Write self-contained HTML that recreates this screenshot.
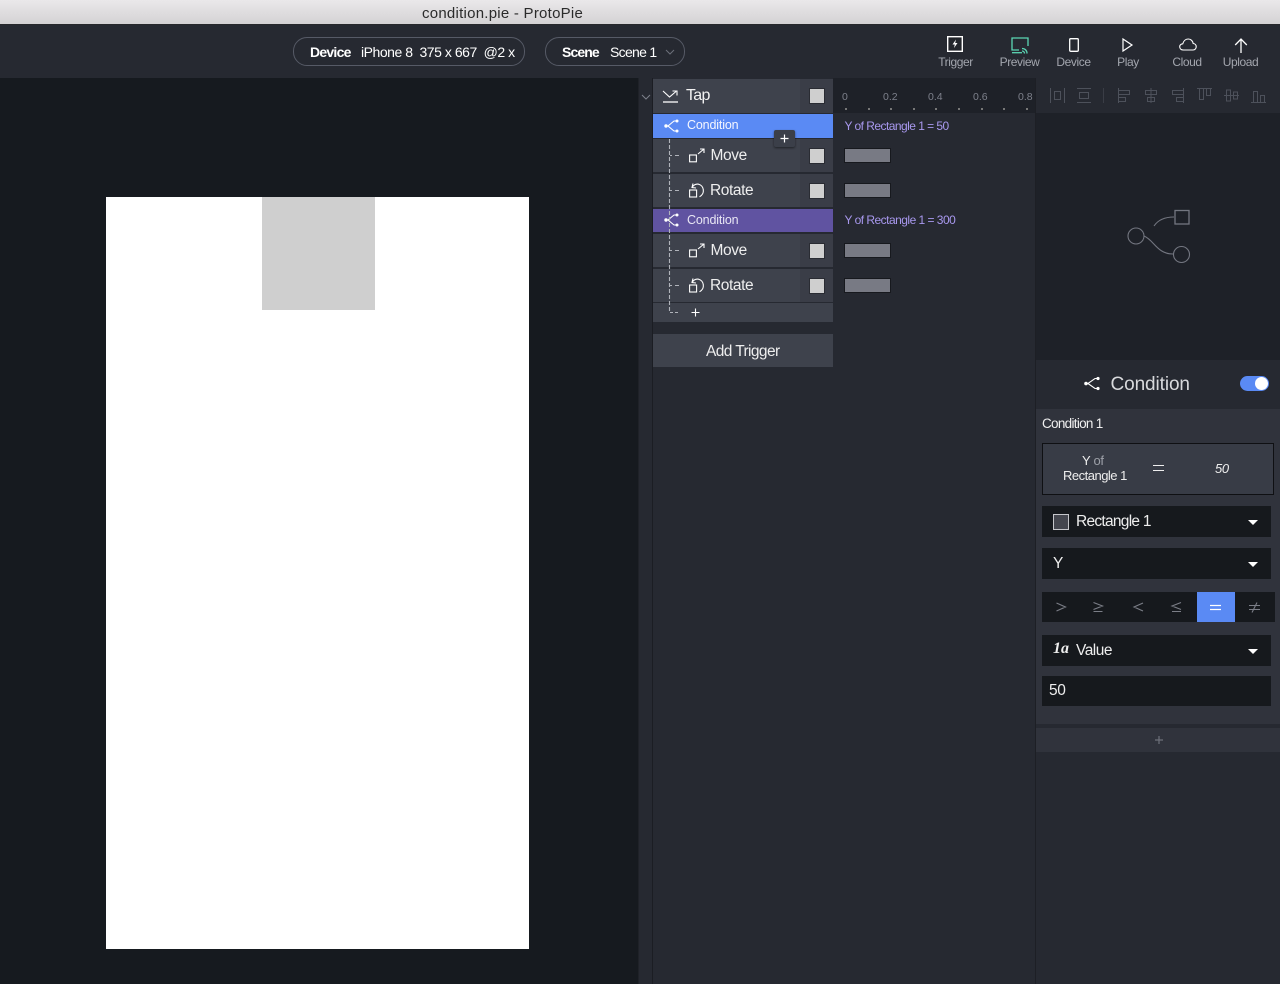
<!DOCTYPE html>
<html><head><meta charset="utf-8"><style>
html,body{margin:0;padding:0;width:1280px;height:984px;overflow:hidden;background:#282b33}
body{position:relative;font-family:"Liberation Sans",sans-serif;color:#fff}
.a,.t{position:absolute}
.t{white-space:nowrap;line-height:16px}
svg{position:absolute;overflow:visible}
.row{position:absolute;left:653px;width:180px;background:#3e424c}
.sw{position:absolute;left:800px;width:33px;background:#3a3d47}
.chk{position:absolute;left:810px;width:14px;height:14px;background:#cfcfcf;box-shadow:0 0 0 1px #2a2c33}
.bar{position:absolute;left:845px;width:45px;height:13px;background:#787a84;box-shadow:0 0 0 1px #17191e}
.sel{position:absolute;left:1042px;width:229px;background:#16191d}
.car{position:absolute;left:1248px;width:0;height:0;border-left:5px solid transparent;border-right:5px solid transparent;border-top:5px solid #fff}
.lbl{font-size:12px;color:#a3a6ae;letter-spacing:-.42px;transform:translateX(-50%)}
.tick{font-size:10.5px;color:#7d808b}
.dot{position:absolute;width:1.5px;height:1.5px;background:#777;top:108px}
</style></head><body>
<div class="a" style="left:0;top:0;width:1280px;height:24px;background:linear-gradient(#eae8ea,#d4d2d4)"></div>
<div class="a" style="left:0;top:24px;width:1280px;height:1px;background:#27282c"></div>
<div class="t" style="left:422px;top:6px;font-size:15px;letter-spacing:.25px;color:#2b2b2b">condition.pie - ProtoPie</div>
<div class="a" style="left:0;top:25px;width:1280px;height:53px;background:#262931"></div>

<div class="a" style="left:293px;top:37px;width:230px;height:27px;border:1px solid #565a66;border-radius:14px"></div>
<div class="t" style="left:310px;top:43.500px;font-size:14px;letter-spacing:-.75px;font-weight:bold">Device</div>
<div class="t" style="left:361px;top:43.500px;font-size:14px;letter-spacing:-.46px">iPhone 8&nbsp; 375 x 667&nbsp; @2 x</div>
<div class="a" style="left:544.500px;top:37px;width:138.500px;height:27px;border:1px solid #565a66;border-radius:14px"></div>
<div class="t" style="left:562px;top:43.500px;font-size:14px;letter-spacing:-.9px;font-weight:bold">Scene</div>
<div class="t" style="left:610px;top:43.500px;font-size:14px;letter-spacing:-.7px">Scene 1</div>
<svg style="left:665px;top:49px" width="10" height="6"><path d="M1 1l4 4 4-4" fill="none" stroke="#6c707a"/></svg>

<!-- toolbar -->
<svg style="left:947px;top:36px" width="16" height="16"><rect x=".7" y=".7" width="14.600" height="14.600" fill="#23262c" stroke="#fff" stroke-width="1.400"/><path d="M9 3.500L5.500 8.500h2.300L7 12l3.500-5H8.200z" fill="#fff"/></svg>
<svg style="left:1011px;top:37px" width="18" height="17" fill="none" stroke="#5bd6b4" stroke-width="1.300"><path d="M8 13H1V1h16v8"/><path d="M1 15.700h10"/><path d="M11 11.500c3 0 5 2 5 5M11 14c1.500 0 2.500 1 2.500 2.500"/></svg>
<svg style="left:1069px;top:38px" width="10" height="14"><rect x=".7" y=".7" width="8.600" height="12.600" rx="1" fill="none" stroke="#fff" stroke-width="1.300"/></svg>
<svg style="left:1122px;top:38px" width="11" height="14"><path d="M1 1l9 6-9 6z" fill="none" stroke="#fff" stroke-width="1.200"/></svg>
<svg style="left:1179px;top:38px" width="18" height="13"><path d="M4.500 12C2 12 .7 10.500.7 8.800S2 6 3.800 5.800C4.500 3 6.500 1 9.200 1c2.700 0 4.600 2 5 4.500 1.800.2 3 1.500 3 3.200S16 12 14 12z" fill="none" stroke="#fff" stroke-width="1.100"/></svg>
<svg style="left:1234px;top:38px" width="14" height="15"><path d="M7 15V1M1.200 7L7 1l5.800 6" fill="none" stroke="#fff" stroke-width="1.300"/></svg>
<div class="t lbl" style="left:955.500px;top:54px">Trigger</div>
<div class="t lbl" style="left:1019.500px;top:54px">Preview</div>
<div class="t lbl" style="left:1073.500px;top:54px">Device</div>
<div class="t lbl" style="left:1128px;top:54px">Play</div>
<div class="t lbl" style="left:1187px;top:54px">Cloud</div>
<div class="t lbl" style="left:1240.500px;top:54px">Upload</div>

<!-- stage -->
<div class="a" style="left:0;top:78px;width:638px;height:906px;background:#161a1f"></div>
<div class="a" style="left:106px;top:197px;width:423px;height:752px;background:#fff"></div>
<div class="a" style="left:261.500px;top:197px;width:113px;height:113px;background:#cfcfcf"></div>

<!-- middle column -->
<div class="a" style="left:638px;top:78px;width:15px;height:906px;background:#262931;box-shadow:inset 1px 0 0 #1f2228,inset -1px 0 0 #1b1d23"></div>
<div class="a" style="left:653px;top:78px;width:382px;height:906px;background:#262931"></div>
<svg style="left:641px;top:94px" width="10" height="6"><path d="M1 1l4 4 4-4" fill="none" stroke="#7d808b"/></svg>

<!-- ruler -->
<div class="a" style="left:833px;top:78px;width:202px;height:35px;background:#1e2128"></div>
<div class="t tick" style="left:842px;top:89px">0</div>
<div class="t tick" style="left:883px;top:89px">0.2</div>
<div class="t tick" style="left:928px;top:89px">0.4</div>
<div class="t tick" style="left:973px;top:89px">0.6</div>
<div class="t tick" style="left:1018px;top:89px">0.8</div>
<i class="dot" style="left:845px"></i><i class="dot" style="left:868px"></i><i class="dot" style="left:890px"></i><i class="dot" style="left:913px"></i><i class="dot" style="left:935px"></i><i class="dot" style="left:958px"></i><i class="dot" style="left:981px"></i><i class="dot" style="left:1003px"></i><i class="dot" style="left:1026px"></i>

<!-- rows -->
<div class="row" style="top:79px;height:34px"></div>
<div class="sw" style="top:79px;height:34px"></div>
<svg style="left:662px;top:90px" width="17" height="13" fill="none" stroke="#fff" stroke-width="1.100"><path d="M1 1l6.500 6L14 1.500M10.500 1H15v4.500"/><path d="M1 12h15" stroke-width="1.300"/></svg>
<div class="t" style="left:686px;top:88px;font-size:16px;letter-spacing:-.7px;color:#f2f2f2">Tap</div>
<div class="chk" style="top:89px"></div>

<div class="a" style="left:653px;top:114px;width:180px;height:24px;background:#5a8af4"></div>
<svg style="left:664px;top:119px" width="16" height="14" fill="none" stroke="#fff" stroke-width="1.100"><path d="M2 7h2L10 2h3M4 7l6 5h3"/><g fill="#fff" stroke="none"><circle cx="2" cy="7" r="1.700"/><circle cx="13" cy="2" r="1.500"/><circle cx="13" cy="12" r="1.500"/></g></svg>
<div class="t" style="left:687px;top:117px;font-size:12.500px;letter-spacing:-.15px;color:#f4f6ff">Condition</div>
<div class="t" style="left:844.500px;top:118px;font-size:12px;letter-spacing:-.54px;color:#a898ee">Y of Rectangle 1 = 50</div>

<div class="row" style="top:139px;height:33px"></div>
<div class="sw" style="top:139px;height:33px"></div>
<svg style="left:689px;top:148px" width="16" height="15" fill="none" stroke="#fff" stroke-width="1.100"><rect x=".6" y="7" width="6.800" height="6.800"/><path d="M9 6l6-5M11 1h4v4"/></svg>
<div class="t" style="left:710.500px;top:148px;font-size:15.500px;letter-spacing:-.4px;color:#eee">Move</div>
<div class="chk" style="top:149px"></div>
<div class="bar" style="top:149px"></div>

<div class="row" style="top:174px;height:33px"></div>
<div class="sw" style="top:174px;height:33px"></div>
<svg style="left:689px;top:183px" width="16" height="15" fill="none" stroke="#fff" stroke-width="1.100"><rect x=".6" y="7" width="7" height="7"/><path d="M3 4.500C5 1.500 7.500.8 9.500 1.200 15 2.500 16.500 10.500 10.500 13.800M4 0.500L3 4.500l4 .5"/></svg>
<div class="t" style="left:710px;top:183px;font-size:15.500px;letter-spacing:-.4px;color:#eee">Rotate</div>
<div class="chk" style="top:184px"></div>
<div class="bar" style="top:184px"></div>

<div class="a" style="left:653px;top:209px;width:180px;height:23px;background:#6053a1"></div>
<svg style="left:664px;top:213px" width="16" height="14" fill="none" stroke="#fff" stroke-width="1.100"><path d="M2 7h2L10 2h3M4 7l6 5h3"/><g fill="#fff" stroke="none"><circle cx="2" cy="7" r="1.700"/><circle cx="13" cy="2" r="1.500"/><circle cx="13" cy="12" r="1.500"/></g></svg>
<div class="t" style="left:687px;top:212px;font-size:12.500px;letter-spacing:-.15px;color:#e8e6f4">Condition</div>
<div class="t" style="left:844.500px;top:212px;font-size:12px;letter-spacing:-.52px;color:#a898ee">Y of Rectangle 1 = 300</div>

<div class="row" style="top:234px;height:33px"></div>
<div class="sw" style="top:234px;height:33px"></div>
<svg style="left:689px;top:243px" width="16" height="15" fill="none" stroke="#fff" stroke-width="1.100"><rect x=".6" y="7" width="6.800" height="6.800"/><path d="M9 6l6-5M11 1h4v4"/></svg>
<div class="t" style="left:710.500px;top:243px;font-size:15.500px;letter-spacing:-.4px;color:#eee">Move</div>
<div class="chk" style="top:244px"></div>
<div class="bar" style="top:244px"></div>

<div class="row" style="top:269px;height:33px"></div>
<div class="sw" style="top:269px;height:33px"></div>
<svg style="left:689px;top:278px" width="16" height="15" fill="none" stroke="#fff" stroke-width="1.100"><rect x=".6" y="7" width="7" height="7"/><path d="M3 4.500C5 1.500 7.500.8 9.500 1.200 15 2.500 16.500 10.500 10.500 13.800M4 0.500L3 4.500l4 .5"/></svg>
<div class="t" style="left:710px;top:278px;font-size:15.500px;letter-spacing:-.4px;color:#eee">Rotate</div>
<div class="chk" style="top:279px"></div>
<div class="bar" style="top:279px"></div>

<div class="row" style="top:303px;height:19px"></div>
<svg style="left:690px;top:307px" width="11" height="11"><path d="M5.500 1.500v8M1.500 5.500h8" stroke="#fff" stroke-width="1.100"/></svg>

<!-- tree dashes -->
<svg style="left:665px;top:139px" width="16" height="180" fill="none" stroke="#b0b3ba" stroke-width="1.100"><path d="M4.500 0V173.500H8" stroke-dasharray="4 2"/><path d="M5 16.500h2M10 16.500h4M5 51.500h2M10 51.500h4M5 111.500h2M10 111.500h4M5 146.500h2M10 146.500h4M10 173.500h3"/></svg>

<!-- + popup -->
<div class="a" style="left:774px;top:130px;width:21px;height:17px;background:#3b3f49;border-radius:2px;box-shadow:0 1px 2px rgba(0,0,0,.5)"></div>
<svg style="left:779px;top:133px" width="11" height="11"><path d="M5.500 1.500v8M1.500 5.500h8" stroke="#fff" stroke-width="1.200"/></svg>

<div class="a" style="left:653px;top:334px;width:180px;height:33px;background:#3e424c"></div>
<div class="t" style="left:706px;top:344px;font-size:15.500px;letter-spacing:-.6px;color:#eee">Add Trigger</div>

<!-- right panel -->
<div class="a" style="left:1035px;top:78px;width:245px;height:906px;background:#262931;box-shadow:inset 1px 0 0 #1d1f25"></div>
<svg style="left:1048px;top:86px" width="225" height="20" fill="none" stroke="#4d515b" stroke-width="1">
<path d="M2.500 2v15M16.500 2v15"/><rect x="6.500" y="5.500" width="6" height="8"/>
<path d="M29 2.500h14M29 16.500h14"/><rect x="31.500" y="6.500" width="9" height="6"/>
<path d="M55.500 2v15" stroke="#3a3d46"/>
<path d="M70.500 2v15"/><rect x="70.500" y="4.500" width="11" height="4"/><rect x="70.500" y="11.500" width="7" height="4"/>
<path d="M103 2v15"/><rect x="97.500" y="4.500" width="11" height="4"/><rect x="99.500" y="11.500" width="7" height="4"/>
<path d="M135.500 2v15"/><rect x="124.500" y="4.500" width="11" height="4"/><rect x="128.500" y="11.500" width="7" height="4"/>
<path d="M149 2.500h15"/><rect x="151.500" y="2.500" width="4" height="11"/><rect x="158.500" y="2.500" width="4" height="7"/>
<path d="M176 9.500h15"/><rect x="178.500" y="4" width="4" height="11"/><rect x="185.500" y="6" width="4" height="7"/>
<path d="M203 16.500h15"/><rect x="205.500" y="5.500" width="4" height="11"/><rect x="212.500" y="9.500" width="4" height="7"/>
</svg>
<div class="a" style="left:1036px;top:113px;width:244px;height:247px;background:#1e2128"></div>
<svg style="left:1125px;top:206px" width="70" height="60" fill="none" stroke="#737680" stroke-width="1.100"><rect x="50" y="4.500" width="14" height="13.500" stroke-width="1.300"/><path d="M29 20c4-6 10-9 20-9"/><circle cx="11" cy="30" r="8"/><circle cx="56.500" cy="48.500" r="8"/><path d="M19 30c10 4 13 18 29 18"/></svg>
<svg style="left:1084px;top:376px" width="17" height="15" fill="none" stroke="#fff" stroke-width="1.100"><path d="M2 7.500h2L11 2.500h3M4 7.500l7 5h3"/><g fill="#fff" stroke="none"><circle cx="2" cy="7.500" r="1.800"/><circle cx="14" cy="2.500" r="1.600"/><circle cx="14" cy="12.500" r="1.600"/></g></svg>
<div class="t" style="left:1110.500px;top:375px;font-size:19px;line-height:20px;letter-spacing:-.1px;color:#d8d9dc">Condition</div>
<div class="a" style="left:1240px;top:376px;width:29px;height:15px;border-radius:8px;background:#5a8af4"></div>
<div class="a" style="left:1255px;top:377px;width:13px;height:13px;border-radius:50%;background:#fff"></div>

<div class="a" style="left:1036px;top:409px;width:244px;height:315px;background:#30333c"></div>
<div class="t" style="left:1042px;top:416px;font-size:13.500px;letter-spacing:-.7px;color:#f0f0f0">Condition 1</div>
<div class="a" style="left:1042px;top:443px;width:230px;height:50px;background:#383c46;border:1px solid #0f1013"></div>
<div class="t" style="left:1082px;top:453px;font-size:13px;letter-spacing:-.3px;color:#eee">Y <span style="color:#9ea1a9">of</span></div>
<div class="t" style="left:1063px;top:468px;font-size:13px;letter-spacing:-.5px;color:#eee">Rectangle 1</div>
<div class="a" style="left:1153px;top:465px;width:11px;height:1px;background:#eee"></div>
<div class="a" style="left:1153px;top:469.500px;width:11px;height:1px;background:#eee"></div>
<div class="t" style="left:1215px;top:461px;font-size:13px;font-style:italic;letter-spacing:-.4px;color:#eee">50</div>

<div class="sel" style="top:506px;height:31px"></div>
<div class="a" style="left:1053px;top:514px;width:14px;height:14px;background:#44464e;border:1px solid #c5c6ca"></div>
<div class="t" style="left:1076px;top:514px;font-size:15.500px;letter-spacing:-.72px;color:#eee">Rectangle 1</div>
<div class="car" style="top:519.500px"></div>
<div class="sel" style="top:548px;height:31px"></div>
<div class="t" style="left:1053px;top:556px;font-size:15.500px;color:#eee">Y</div>
<div class="car" style="top:561.500px"></div>

<div class="a" style="left:1042px;top:592px;width:233px;height:30px;background:#16191d"></div>
<div class="a" style="left:1196.500px;top:592px;width:38.500px;height:30px;background:#5a8af4"></div>
<svg style="left:1042px;top:592px" width="233" height="30" fill="none" stroke="#7b7e87" stroke-width="1.100">
<path d="M14.500 11l9 4-9 4M51.500 10.500l9 3.500-9 3.500M51.500 19.500h9M101 11l-9 4 9 4M139 10.500l-9 3.500 9 3.500M130 19.500h9"/>
<path d="M168 13.500h11M168 17.500h11" stroke="#fff" stroke-width="1.300"/>
<path d="M207 13.500h11M207 17.500h11M215 10.500l-5 10"/></svg>

<div class="sel" style="top:635px;height:31px"></div>
<div class="t" style="left:1053px;top:641px;font-size:16px;font-family:'Liberation Serif',serif;font-style:italic;font-weight:bold;color:#eee">1a</div>
<div class="t" style="left:1076px;top:643px;font-size:15.500px;letter-spacing:-.5px;color:#eee">Value</div>
<div class="car" style="top:648.500px"></div>
<div class="sel" style="top:676px;height:30px"></div>
<div class="t" style="left:1049px;top:683px;font-size:15.500px;letter-spacing:-.4px;color:#eee">50</div>

<div class="a" style="left:1036px;top:728px;width:244px;height:24px;background:#30333c"></div>
<svg style="left:1154px;top:735px" width="10" height="10"><path d="M5 1v8M1 5h8" stroke="#6d707a" stroke-width="1.200"/></svg>
</body></html>
